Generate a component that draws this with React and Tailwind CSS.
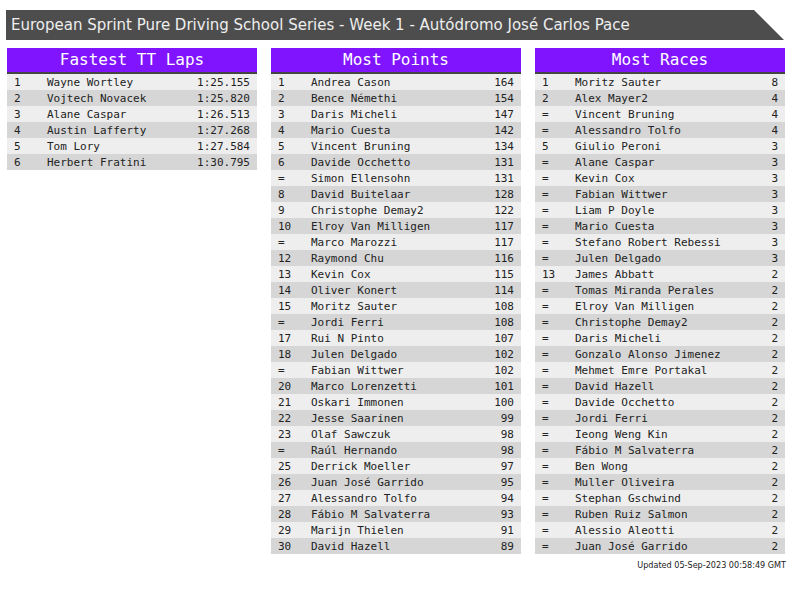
import React from 'react'

const TT_LAPS = [
  ['1', 'Wayne Wortley', '1:25.155'],
  ['2', 'Vojtech Novacek', '1:25.820'],
  ['3', 'Alane Caspar', '1:26.513'],
  ['4', 'Austin Lafferty', '1:27.268'],
  ['5', 'Tom Lory', '1:27.584'],
  ['6', 'Herbert Fratini', '1:30.795'],
]

const POINTS = [
  ['1', 'Andrea Cason', '164'],
  ['2', 'Bence Némethi', '154'],
  ['3', 'Daris Micheli', '147'],
  ['4', 'Mario Cuesta', '142'],
  ['5', 'Vincent Bruning', '134'],
  ['6', 'Davide Occhetto', '131'],
  ['=', 'Simon Ellensohn', '131'],
  ['8', 'David Buitelaar', '128'],
  ['9', 'Christophe Demay2', '122'],
  ['10', 'Elroy Van Milligen', '117'],
  ['=', 'Marco Marozzi', '117'],
  ['12', 'Raymond Chu', '116'],
  ['13', 'Kevin Cox', '115'],
  ['14', 'Oliver Konert', '114'],
  ['15', 'Moritz Sauter', '108'],
  ['=', 'Jordi Ferri', '108'],
  ['17', 'Rui N Pinto', '107'],
  ['18', 'Julen Delgado', '102'],
  ['=', 'Fabian Wittwer', '102'],
  ['20', 'Marco Lorenzetti', '101'],
  ['21', 'Oskari Immonen', '100'],
  ['22', 'Jesse Saarinen', '99'],
  ['23', 'Olaf Sawczuk', '98'],
  ['=', 'Raúl Hernando', '98'],
  ['25', 'Derrick Moeller', '97'],
  ['26', 'Juan José Garrido', '95'],
  ['27', 'Alessandro Tolfo', '94'],
  ['28', 'Fábio M Salvaterra', '93'],
  ['29', 'Marijn Thielen', '91'],
  ['30', 'David Hazell', '89'],
]

const RACES = [
  ['1', 'Moritz Sauter', '8'],
  ['2', 'Alex Mayer2', '4'],
  ['=', 'Vincent Bruning', '4'],
  ['=', 'Alessandro Tolfo', '4'],
  ['5', 'Giulio Peroni', '3'],
  ['=', 'Alane Caspar', '3'],
  ['=', 'Kevin Cox', '3'],
  ['=', 'Fabian Wittwer', '3'],
  ['=', 'Liam P Doyle', '3'],
  ['=', 'Mario Cuesta', '3'],
  ['=', 'Stefano Robert Rebessi', '3'],
  ['=', 'Julen Delgado', '3'],
  ['13', 'James Abbatt', '2'],
  ['=', 'Tomas Miranda Perales', '2'],
  ['=', 'Elroy Van Milligen', '2'],
  ['=', 'Christophe Demay2', '2'],
  ['=', 'Daris Micheli', '2'],
  ['=', 'Gonzalo Alonso Jimenez', '2'],
  ['=', 'Mehmet Emre Portakal', '2'],
  ['=', 'David Hazell', '2'],
  ['=', 'Davide Occhetto', '2'],
  ['=', 'Jordi Ferri', '2'],
  ['=', 'Ieong Weng Kin', '2'],
  ['=', 'Fábio M Salvaterra', '2'],
  ['=', 'Ben Wong', '2'],
  ['=', 'Muller Oliveira', '2'],
  ['=', 'Stephan Gschwind', '2'],
  ['=', 'Ruben Ruiz Salmon', '2'],
  ['=', 'Alessio Aleotti', '2'],
  ['=', 'Juan José Garrido', '2'],
]

function Board({ title, rows }) {
  return (
    <div className="w-[250px]">
      <div className="h-[24px] bg-[#8014ff] text-white text-[16px] leading-[24px] text-center border-b-2 border-[#444444] box-content">
        {title}
      </div>
      {rows.map(([pos, name, value], i) => (
        <div
          key={i}
          className={`flex h-[16px] pt-[1px] leading-[16px] px-[7px] text-[11px] text-[#222222] ${
            i % 2 === 0 ? 'bg-[#eeeeee]' : 'bg-[#d6d6d6]'
          }`}
        >
          <span className="w-[33px]">{pos}</span>
          <span className="flex-1 whitespace-pre">{name}</span>
          <span>{value}</span>
        </div>
      ))}
    </div>
  )
}

export default function App() {
  return (
    <div className="w-[800px] h-[600px] bg-white pt-[10px]">
      <div className="ml-[6px] w-[778px] h-[30px] bg-[#4d4d4d] [clip-path:polygon(0_0,calc(100%-30px)_0,100%_100%,0_100%)] flex items-center pl-[5px]">
        <span className="text-[15px] text-[#eeeeee] font-['DejaVu_Sans',sans-serif]">
          European Sprint Pure Driving School Series - Week 1 - Autódromo José Carlos Pace
        </span>
      </div>
      <div className="flex gap-[14px] ml-[7px] mt-[8px] font-['DejaVu_Sans_Mono',monospace]">
        <Board title="Fastest TT Laps" rows={TT_LAPS} />
        <Board title="Most Points" rows={POINTS} />
        <div className="flex flex-col items-end">
          <Board title="Most Races" rows={RACES} />
          <div className="mt-[6px] mr-[-1px] text-[9px] leading-[10px] text-[#222222] font-['DejaVu_Sans_Condensed','DejaVu_Sans',sans-serif] [font-stretch:condensed]">
            Updated 05-Sep-2023 00:58:49 GMT
          </div>
        </div>
      </div>
    </div>
  )
}
